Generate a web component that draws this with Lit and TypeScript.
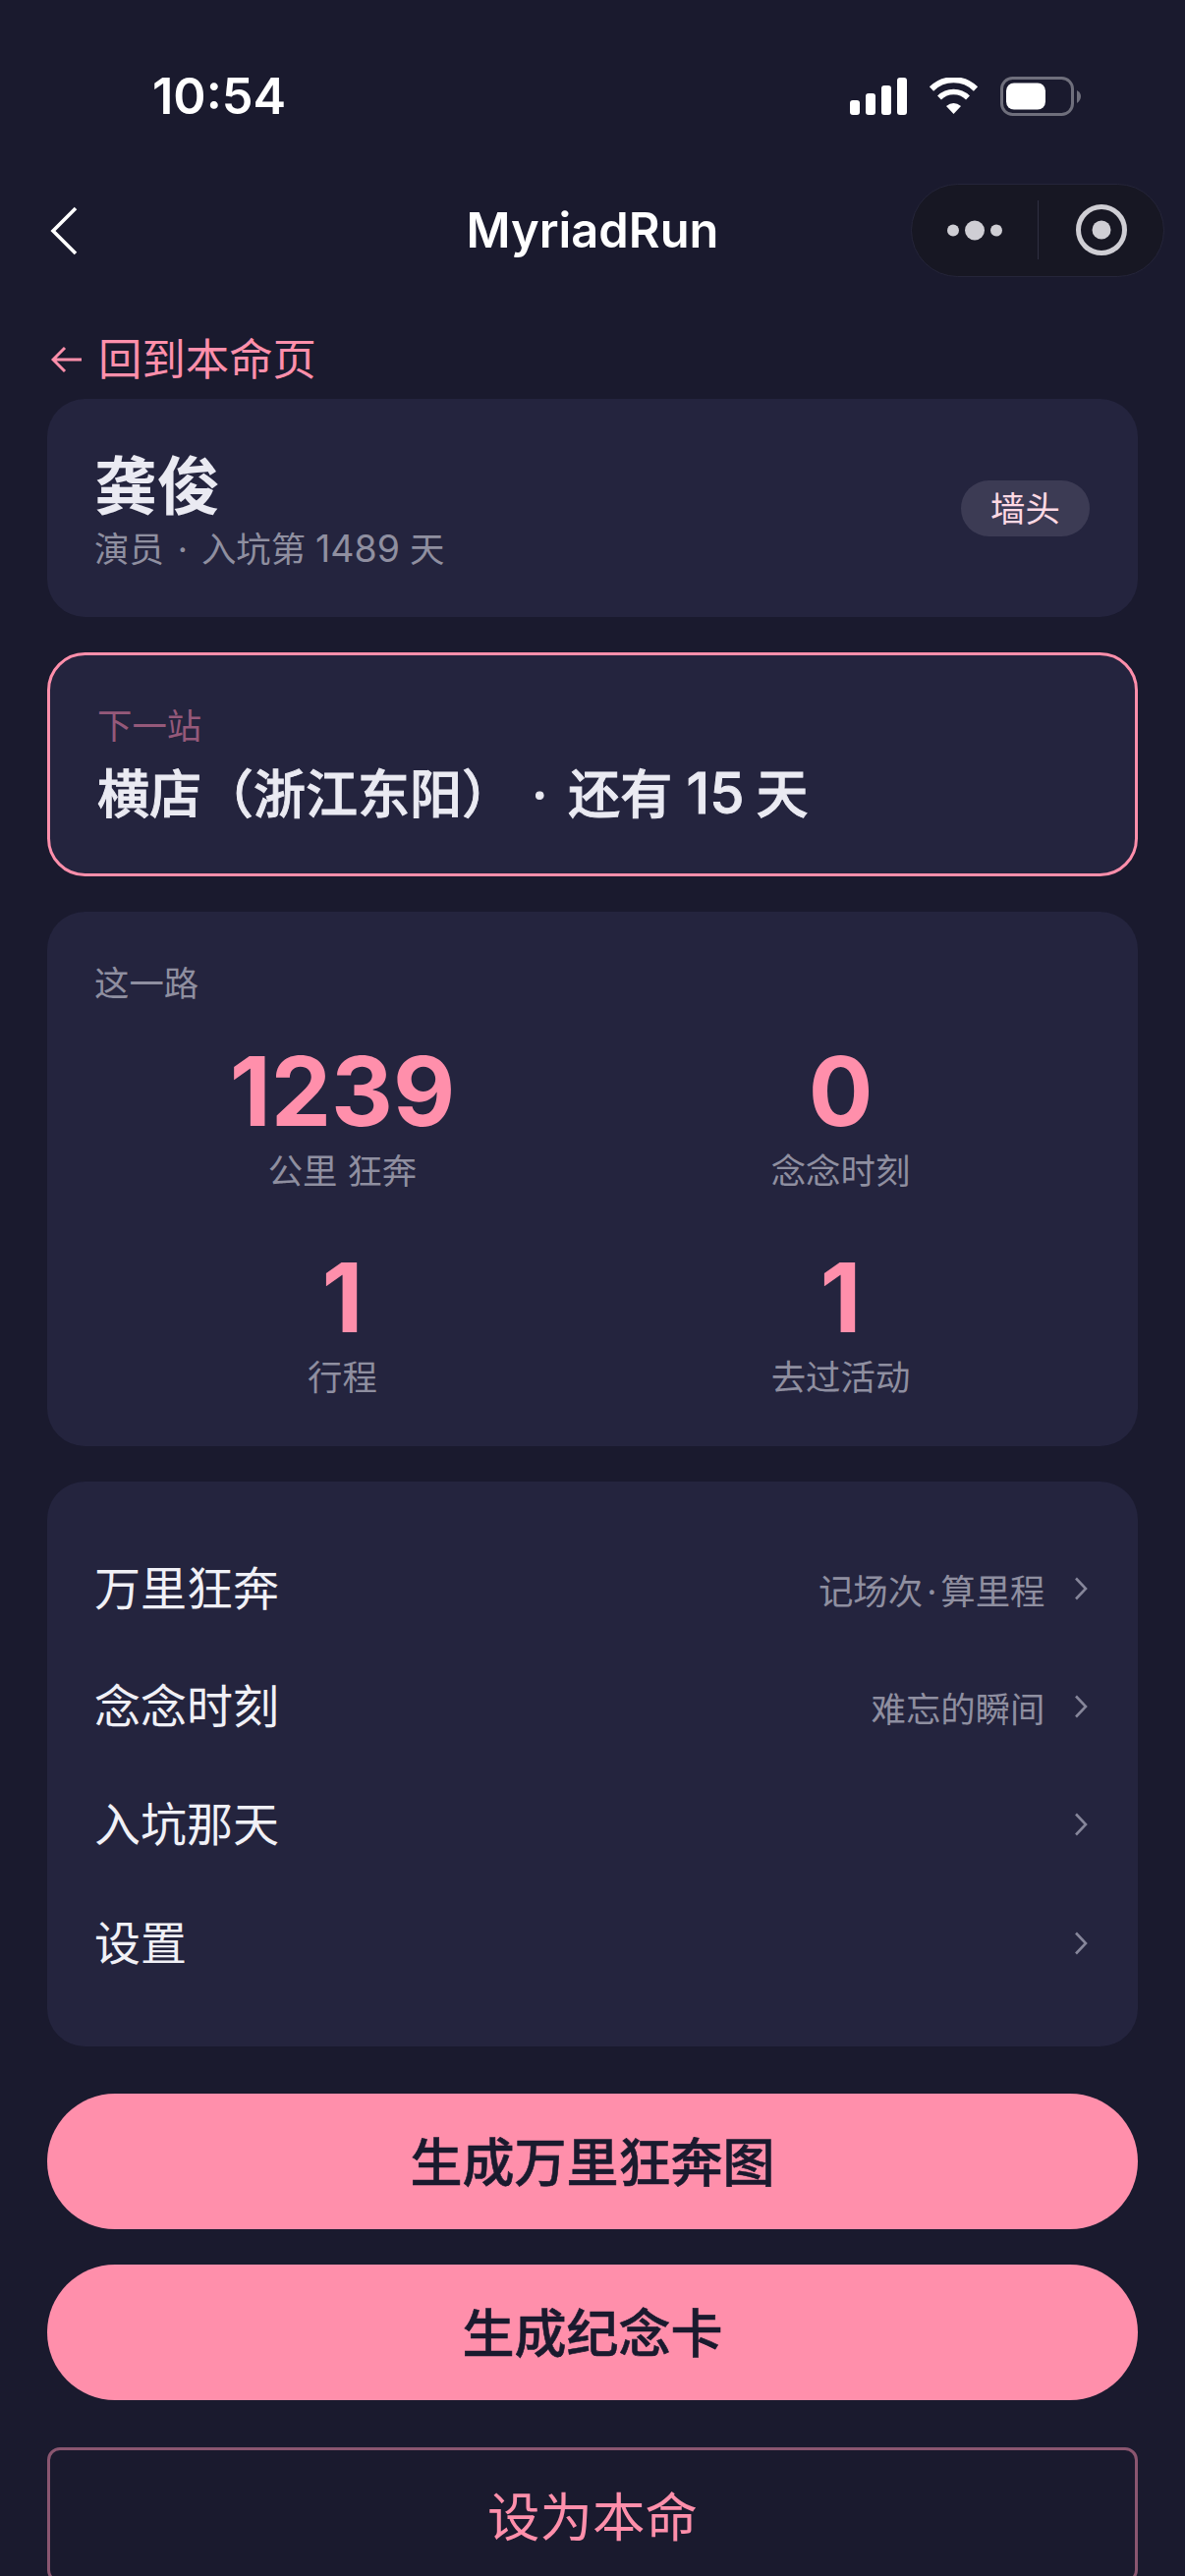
import { LitElement, html, css } from "lit";
import { customElement } from "lit/decorators.js";

const chevron = html`<svg class="chev" viewBox="0 0 14 24" fill="none"><path d="M2 1.5 L12 12 L2 22.5" stroke="currentColor" stroke-width="2.6"/></svg>`;

@customElement("app-root")
export class AppRoot extends LitElement {
  static styles = css`
    :host {
      display: block;
      width: 1206px;
      height: 2622px;
      overflow: hidden;
      background: #1a1a2e;
      color: #eaeaf2;
      font-family: Inter, "Noto Sans CJK SC", sans-serif;
    }
    .status {
      height: 174px;
      box-sizing: border-box;
      padding: 71px 105px 0 155px;
      display: flex;
      justify-content: space-between;
      align-items: flex-start;
    }
    .time { font-size: 50.5px; line-height: 54px; font-weight: 600; color: #fff; }
    .sysicons { display: flex; align-items: flex-start; margin-top: 8px; }
    .signal { width: 58px; height: 38px; display: block; }
    .wifi { width: 51px; height: 37px; display: block; margin-left: 22px; }
    .battery { width: 83px; height: 40px; display: block; margin-left: 22px; margin-top: -1px; }
    .nav {
      height: 121px;
      display: flex;
      align-items: center;
      justify-content: space-between;
      position: relative;
      padding: 0 21px 0 51px;
    }
    .back { width: 29px; height: 50px; display: block; }
    .title {
      position: absolute;
      left: 0;
      right: 0;
      text-align: center;
      font-size: 48.8px;
      line-height: 60px;
      font-weight: 600;
      color: #fff;
      pointer-events: none;
    }
    .capsule { width: 258px; height: 95px; display: block; }
    .page {
      padding: 0 48px;
      display: flex;
      flex-direction: column;
    }
    .backlink {
      font-size: 44.4px;
      line-height: 52px;
      color: #ff8fab;
      height: 52px;
      margin-top: 45px;
      margin-bottom: 14px;
      display: flex;
      align-items: center;
    }
    .backlink svg { width: 32px; height: 28px; margin: 0 16px 0 4px; display: block; }
    .card {
      background: #24243e;
      border-radius: 38.6px;
      box-sizing: border-box;
      margin-bottom: 36px;
    }
    .profile {
      height: 222px;
      padding: 0 48px;
      display: flex;
      align-items: center;
      justify-content: space-between;
    }
    .name { font-size: 64px; line-height: 76px; font-weight: 700; margin-top: 5px; }
    .sub { font-size: 35.4px; line-height: 44px; color: #8f8fa0; margin-top: 4px; }
    .sub .dot { margin: 0 4px; }
    .sub .n { font-size: 37.5px; }
    .tag {
      height: 57px;
      width: 131px;
      border-radius: 29px;
      background: #3c3b54;
      color: #ffd9e4;
      font-size: 35.4px;
      line-height: 59px;
      text-align: center;
      margin-right: 1px;
    }
    .next {
      height: 228px;
      border: 3px solid #ff8fab;
      padding: 51px 48px 0;
    }
    .next-label { font-size: 35.4px; line-height: 44px; color: #95597a; }
    .next-value {
      font-size: 53px;
      line-height: 64px;
      font-weight: 500;
      -webkit-text-stroke: 0.9px currentColor;
      margin-top: 14px;
      color: #eaeaf2;
    }
    .next-value .dot { margin-right: 7px; }
    .next-value .n { font-size: 57px; margin-right: -2px; }
    .stats { height: 544px; padding: 52px 48px 0; }
    .stats-title { font-size: 35.4px; line-height: 44px; color: #8f8fa0; }
    .grid { display: grid; grid-template-columns: 1fr 1fr; margin: 29px 1px 0 -1px; }
    .stat { height: 210px; text-align: center; }
    .num { font-size: 97.5px; line-height: 116px; font-weight: 700; color: #ff8fab; }
    .lab { font-size: 35.4px; line-height: 44px; color: #8f8fa0; margin-top: 2px; }
    .list { height: 575px; padding: 49px 51px 0 48px; }
    .row { height: 120.2px; display: flex; align-items: center; }
    .row-title { font-size: 47px; line-height: 60px; flex: 1; color: #f0f0f6; }
    .row-hint { font-size: 35.4px; color: #8f8fa0; margin-right: -1.5px; }
    .dot { margin: 0 4px; }
    .chev { width: 14px; height: 24px; color: #86869a; margin-left: 31px; display: block; }
    .btn {
      height: 138px;
      box-sizing: border-box;
      padding-bottom: 5px;
      border-radius: 69px;
      background: #ff8fab;
      color: #1a1a2e;
      font-size: 53px;
      font-weight: 500;
      -webkit-text-stroke: 0.6px currentColor;
      display: flex;
      align-items: center;
      justify-content: center;
      margin-bottom: 36px;
    }
    .btn.first { margin-top: 12px; }
    .outline {
      height: 138px;
      box-sizing: border-box;
      padding-bottom: 3px;
      border: 3px solid #8a5670;
      border-radius: 13px;
      color: #ff8fab;
      font-size: 53.5px;
      display: flex;
      align-items: center;
      justify-content: center;
      margin-top: 12px;
      flex: none;
    }
  `;

  render() {
    const stats = [
      ["1239", "公里 狂奔"],
      ["0", "念念时刻"],
      ["1", "行程"],
      ["1", "去过活动"],
    ];
    return html`
      <div class="status">
        <div class="time">10:54</div>
        <div class="sysicons">
          <svg class="signal" viewBox="0 0 58 38" fill="#fff">
            <rect x="0" y="23" width="10" height="15" rx="3"/>
            <rect x="16" y="16" width="10" height="22" rx="3"/>
            <rect x="32" y="8" width="10" height="30" rx="3"/>
            <rect x="48" y="0" width="10" height="38" rx="3"/>
          </svg>
          <svg class="wifi" viewBox="0 0 51 37" fill="none" stroke="#fff">
            <path d="M3 11.5 A32 32 0 0 1 48 11.5" stroke-width="6"/>
            <path d="M11 20.5 A20.5 20.5 0 0 1 40 20.5" stroke-width="5.5"/>
            <path d="M25.5 37 L18 29 Q25.5 23 33 29 Z" fill="#fff" stroke="none"/>
          </svg>
          <svg class="battery" viewBox="0 0 83 40">
            <rect x="1.5" y="1.5" width="72" height="37" rx="11" fill="none" stroke="#6f6f7c" stroke-width="3"/>
            <rect x="6" y="6.5" width="40" height="27" rx="8" fill="#fff"/>
            <path d="M78 14 Q82 16 82 20 Q82 24 78 27 Z" fill="#6f6f7c"/>
          </svg>
        </div>
      </div>
      <div class="nav">
        <svg class="back" viewBox="0 0 29 50" fill="none"><path d="M26 2 L3 25 L26 48" stroke="#fff" stroke-width="3.6"/></svg>
        <div class="title">MyriadRun</div>
        <svg class="capsule" viewBox="0 0 258 95">
          <rect x="0.5" y="0.5" width="257" height="94" rx="47" fill="#171723" stroke="#25253a"/>
          <circle cx="43" cy="47.500" r="6" fill="#cfced4"/>
          <circle cx="65" cy="47.500" r="10" fill="#cfced4"/>
          <circle cx="87" cy="47.500" r="6" fill="#cfced4"/>
          <rect x="129" y="17" width="1" height="60" fill="#2f2f42"/>
          <circle cx="194" cy="47" r="23.500" fill="none" stroke="#cfced4" stroke-width="5"/>
          <circle cx="194" cy="47" r="9.500" fill="#cfced4"/>
        </svg>
      </div>
      <div class="page">
        <div class="backlink">
          <svg viewBox="0 0 32 28" fill="none" stroke="#ff8fab" stroke-width="3"><path d="M31 14 H2 M14 2 L2 14 L14 26"/></svg>
          <span>回到本命页</span>
        </div>
        <div class="card profile">
          <div>
            <div class="name">龚俊</div>
            <div class="sub">演员 <span class="dot">·</span> 入坑第 <span class="n">1489</span> 天</div>
          </div>
          <div class="tag">墙头</div>
        </div>
        <div class="card next">
          <div class="next-label">下一站</div>
          <div class="next-value">横店（浙江东阳） <span class="dot">·</span> 还有 <span class="n">15</span> 天</div>
        </div>
        <div class="card stats">
          <div class="stats-title">这一路</div>
          <div class="grid">
            ${stats.map(
              ([n, l]) => html`<div class="stat"><div class="num">${n}</div><div class="lab">${l}</div></div>`
            )}
          </div>
        </div>
        <div class="card list">
          <div class="row"><div class="row-title">万里狂奔</div><div class="row-hint">记场次<span class="dot">·</span>算里程</div>${chevron}</div>
          <div class="row"><div class="row-title">念念时刻</div><div class="row-hint">难忘的瞬间</div>${chevron}</div>
          <div class="row"><div class="row-title">入坑那天</div>${chevron}</div>
          <div class="row"><div class="row-title">设置</div>${chevron}</div>
        </div>
        <div class="btn first">生成万里狂奔图</div>
        <div class="btn">生成纪念卡</div>
        <div class="outline">设为本命</div>
      </div>
    `;
  }
}
